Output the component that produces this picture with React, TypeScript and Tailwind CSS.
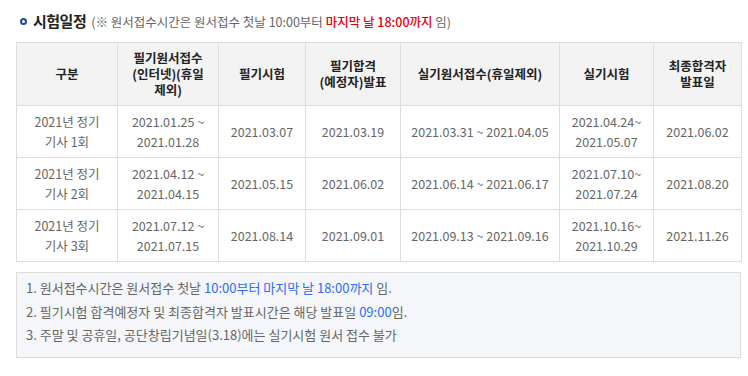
import React from 'react';

interface ScheduleRow {
  round: string;
  writtenApply: [string, string];
  writtenExam: string;
  writtenResult: string;
  practicalApply: string;
  practicalExam: [string, string];
  finalResult: string;
}

const rows: ScheduleRow[] = [
  {
    round: '1회',
    writtenApply: ['2021.01.25 ~', '2021.01.28'],
    writtenExam: '2021.03.07',
    writtenResult: '2021.03.19',
    practicalApply: '2021.03.31 ~ 2021.04.05',
    practicalExam: ['2021.04.24~', '2021.05.07'],
    finalResult: '2021.06.02',
  },
  {
    round: '2회',
    writtenApply: ['2021.04.12 ~', '2021.04.15'],
    writtenExam: '2021.05.15',
    writtenResult: '2021.06.02',
    practicalApply: '2021.06.14 ~ 2021.06.17',
    practicalExam: ['2021.07.10~', '2021.07.24'],
    finalResult: '2021.08.20',
  },
  {
    round: '3회',
    writtenApply: ['2021.07.12 ~', '2021.07.15'],
    writtenExam: '2021.08.14',
    writtenResult: '2021.09.01',
    practicalApply: '2021.09.13 ~ 2021.09.16',
    practicalExam: ['2021.10.16~', '2021.10.29'],
    finalResult: '2021.11.26',
  },
];

const th = 'border border-[#dddddd] bg-[#f3f3f3] px-1 py-[6px] text-[12.5px] font-bold leading-[16px] text-[#222] align-middle';
const td = 'border border-[#dddddd] px-1 py-[5px] text-[12.5px] leading-[20px] text-[#666] align-middle';

const App: React.FC = () => {
  return (
    <div className="w-[748px] h-[376px] bg-white pt-[11px] px-4 font-['Noto_Sans_CJK_KR',sans-serif]">
      {/* title */}
      <div className="flex items-center h-[21px] pl-[4px]">
        <span className="w-[7px] h-[7px] rounded-full border-[2px] border-[#1f4e8c] bg-white mr-[6px]" />
        <h2 className="text-[15px] font-bold text-[#222] tracking-[-0.5px]">시험일정</h2>
        <p className="ml-[5px] text-[12.5px] text-[#666] mt-[2px]">
          (※ 원서접수시간은 원서접수 첫날 10:00부터{' '}
          <span className="text-[#e8000b] font-medium">마지막 날 18:00까지</span>
          {' '}임)
        </p>
      </div>

      {/* schedule table */}
      <table className="mt-[10px] w-[725px] border-collapse table-fixed text-center">
        <colgroup>
          <col className="w-[101px]" />
          <col className="w-[101px]" />
          <col className="w-[87px]" />
          <col className="w-[95px]" />
          <col className="w-[159px]" />
          <col className="w-[94px]" />
          <col className="w-[88px]" />
        </colgroup>
        <thead>
          <tr className="h-[63px]">
            <th className={th}>구분</th>
            <th className={th}>필기원서접수<br />(인터넷)(휴일<br />제외)</th>
            <th className={th}>필기시험</th>
            <th className={th}>필기합격<br />(예정자)발표</th>
            <th className={th}>실기원서접수(휴일제외)</th>
            <th className={th}>실기시험</th>
            <th className={th}>최종합격자<br />발표일</th>
          </tr>
        </thead>
        <tbody>
          {rows.map((r) => (
            <tr key={r.round} className="h-[52px]">
              <td className={td}>2021년 정기<br />기사 {r.round}</td>
              <td className={td}>{r.writtenApply[0]}<br />{r.writtenApply[1]}</td>
              <td className={td}>{r.writtenExam}</td>
              <td className={td}>{r.writtenResult}</td>
              <td className={td}>{r.practicalApply}</td>
              <td className={td}>{r.practicalExam[0]}<br />{r.practicalExam[1]}</td>
              <td className={td}>{r.finalResult}</td>
            </tr>
          ))}
        </tbody>
      </table>

      {/* notice */}
      <div className="mt-[10px] w-[725px] h-[86px] border border-[#dddddd] bg-[#f5f6fa] pl-[9px] pt-[3px] text-[13px] leading-[23.5px] text-[#666]">
        <p>1. 원서접수시간은 원서접수 첫날 <span className="text-[#2c6ef2]">10:00부터 마지막 날 18:00까지</span> 임.</p>
        <p>2. 필기시험 합격예정자 및 최종합격자 발표시간은 해당 발표일 <span className="text-[#2c6ef2]">09:00</span>임.</p>
        <p>3. 주말 및 공휴일, 공단창립기념일(3.18)에는 실기시험 원서 접수 불가</p>
      </div>
    </div>
  );
};

export default App;
